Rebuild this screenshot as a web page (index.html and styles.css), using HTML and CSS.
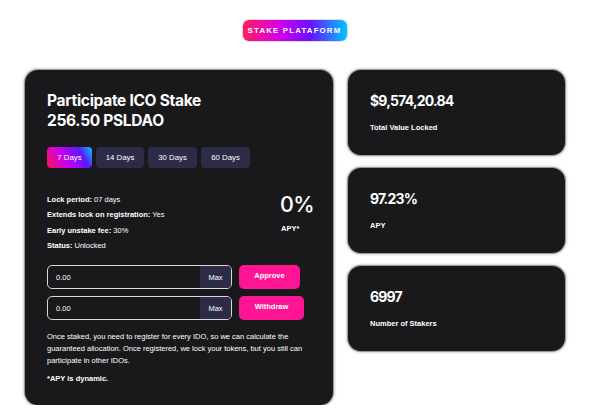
FILE: index.html
```html
<!DOCTYPE html>
<html>
<head>
<meta charset="utf-8">
<link rel="stylesheet" href="styles.css">
</head>
<body>
<div class="page">
  <div class="header"><span class="brand">STAKE PLATAFORM</span></div>
  <div class="row">
    <div class="card main">
      <h1 class="title">Participate ICO Stake<br>256.50 PSLDAO</h1>
      <div class="tabs">
        <span class="tab active">7 Days</span>
        <span class="tab">14 Days</span>
        <span class="tab">30 Days</span>
        <span class="tab">60 Days</span>
      </div>
      <div class="info">
        <div class="lines">
          <p><b>Lock period:</b> 07 days</p>
          <p><b>Extends lock on registration:</b> Yes</p>
          <p><b>Early unstake fee:</b> 30%</p>
          <p><b>Status:</b> Unlocked</p>
        </div>
        <div class="apy">
          <div class="apy-val">0%</div>
          <div class="apy-lbl">APY*</div>
        </div>
      </div>
      <div class="form-row">
        <div class="field"><span class="val">0.00</span><span class="max">Max</span></div>
        <button class="btn">Approve</button>
      </div>
      <div class="form-row">
        <div class="field"><span class="val">0.00</span><span class="max">Max</span></div>
        <button class="btn wide">Withdraw</button>
      </div>
      <p class="note">Once staked, you need to register for every IDO, so we can calculate the guaranteed allocation. Once registered, we lock your tokens, but you still can participate in other IDOs.</p>
      <p class="note bold">*APY is dynamic.</p>
    </div>
    <div class="side">
      <div class="card stat">
        <div class="stat-val">$9,574,20.84</div>
        <div class="stat-lbl">Total Value Locked</div>
      </div>
      <div class="card stat">
        <div class="stat-val">97.23%</div>
        <div class="stat-lbl">APY</div>
      </div>
      <div class="card stat">
        <div class="stat-val">6997</div>
        <div class="stat-lbl">Number of Stakers</div>
      </div>
    </div>
  </div>
</div>
</body>
</html>
```
FILE: styles.css
```css
* { box-sizing: border-box; }
html, body { margin: 0; padding: 0; background: #fff; }
body { font-family: "Liberation Sans", Arial, sans-serif; color: #fff; }
.page { width: 599px; padding-top: 20px; display: flex; flex-direction: column; align-items: center; }
.header { height: 21px; margin-left: -10px; }
.brand {
  display: block; height: 21px; width: 104px; border-radius: 6px;
  background: linear-gradient(90deg, #ff1e5a 0%, #d400e8 35%, #6a10ff 65%, #00c8ff 100%);
  box-shadow: 0 0 0 1px #ddd;
  font-family: "Liberation Sans", Arial, sans-serif; font-weight: 700; font-size: 7.8px;
  letter-spacing: 1.2px; text-align: center; line-height: 21px; color: #fff;
}
.row { display: flex; gap: 15px; margin-top: 29px; margin-left: -9px; }
.card {
  background: #19191b; border-radius: 13px;
  box-shadow: 0 0 0 1px #9a9a9a, 0 0 3px 1px rgba(0,0,0,0.35);
}
.main { width: 308px; height: 335px; padding: 21px 22px 0 22px; }
.title {
  margin: 0; font-family: "Inter", sans-serif; font-weight: 700; font-size: 15.5px;
  line-height: 20px; letter-spacing: -0.3px;
}
.tabs { display: flex; gap: 4px; margin-top: 16px; }
.tab {
  width: 49px; height: 21px; border-radius: 4px; background: #2c2c48;
  font-size: 7.8px; line-height: 21px; text-align: center; color: #fff;
}
.tab:first-child { width: 45px; }
.tab:nth-child(2) { width: 48px; }
.tab.active { background: linear-gradient(60deg, #ff1055 0%, #c800f0 40%, #5a18ff 75%, #00d0ff 100%); }
.info { display: flex; justify-content: space-between; margin-top: 27px; }
.lines p { margin: 0 0 6.3px; font-size: 7.5px; line-height: 9px; }
.apy { width: 31px; text-align: left; margin-top: -3px; }
.apy-val { font-family: "Inter", sans-serif; font-weight: 500; font-size: 21.5px; line-height: 24px; letter-spacing: -0.6px; }
.apy-lbl { margin-top: 8px; margin-left: 1px; font-size: 7.5px; font-weight: 700; }
.form-row { display: flex; gap: 7px; margin-top: 7px; }
.info + .form-row { margin-top: 9px; }
.field {
  width: 185px; height: 24px; border: 1px solid #d8d8d8; border-radius: 5px;
  display: flex; align-items: center; overflow: hidden; font-size: 7.5px;
}
.val { flex: 1; padding-left: 8px; }
.max { width: 31px; height: 100%; background: #2c2c48; display: flex; align-items: center; justify-content: center; }
.btn {
  width: 61px; height: 24px; border: 0; border-radius: 5px; background: #ff1493;
  color: #fff; font-family: "Liberation Sans", Arial, sans-serif; font-weight: 700; font-size: 7.5px;
  padding: 0 0 3px 0;
}
.btn.wide { width: 65px; }
.note { margin: 11px 0 0; font-size: 7.5px; line-height: 12px; }
.note.bold { font-weight: 700; margin-top: 6px; }
.side { display: flex; flex-direction: column; gap: 13px; }
.stat { width: 217px; height: 85px; padding: 22px 22px 0; }
.stat-val { font-family: "Inter", sans-serif; font-weight: 700; font-size: 14px; line-height: 18px; letter-spacing: -0.8px; }
.stat-lbl { margin-top: 13px; font-size: 7.5px; font-weight: 700; }
```
